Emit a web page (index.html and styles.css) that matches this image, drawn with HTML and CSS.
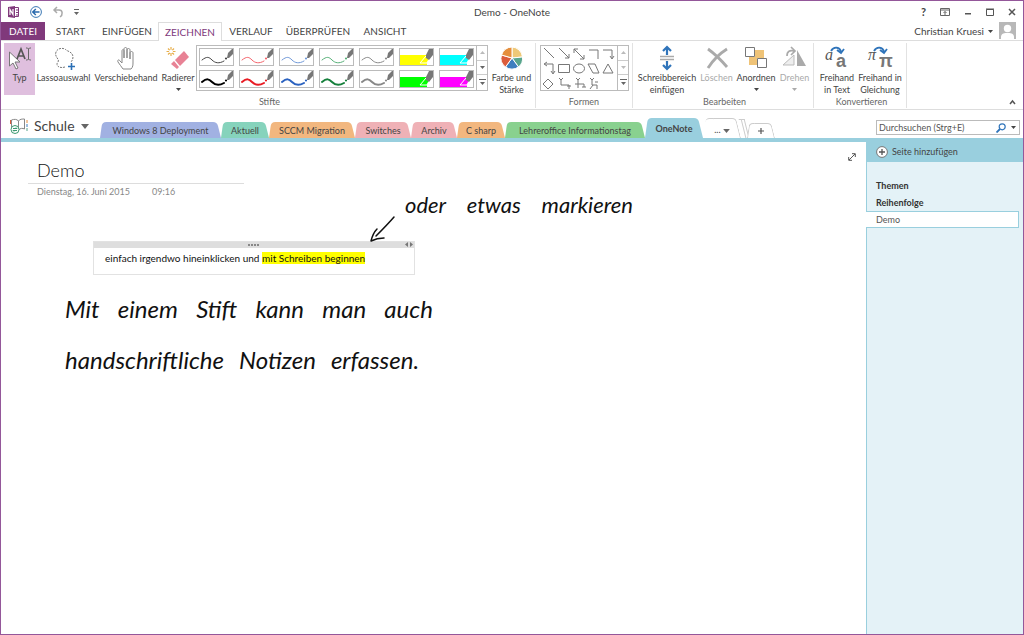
FILE: index.html
```html
<!DOCTYPE html>
<html lang="de">
<head>
<meta charset="utf-8">
<title>Demo - OneNote</title>
<link rel="stylesheet" href="styles.css">
</head>
<body>
<svg class="defs" aria-hidden="true">
  <symbol id="pen" viewBox="0 0 33 16">
    <path d="M2 11C7 7 9 8 12 11s7 4 12 1" fill="none" stroke="currentColor" stroke-width="var(--w)" stroke-linecap="round"/>
    <circle cx="26" cy="9.500" r="1.100" fill="currentColor"/>
    <path d="M27 9l1-5 4-4h1v5l-4 4z" fill="#777"/>
  </symbol>
  <symbol id="marker" viewBox="0 0 33 16">
    <path d="M0 6h27v10H0z" fill="currentColor"/>
    <path d="M20 14l6-7 3 3-2 4z" fill="currentColor" stroke="#fff"/>
    <path d="M26 6l3-6h4v6l-4 5-3-2z" fill="#777"/>
  </symbol>
  <symbol id="down" viewBox="0 0 5 3"><path d="M0 0h5L2.500 3z" fill="currentColor"/></symbol>
  <symbol id="more" viewBox="0 0 7 7"><path d="M0 0h7v1H0zM1 3h5L3.500 6z" fill="currentColor"/></symbol>
</svg>

<header class="titlebar">
  <div class="quick">
    <svg class="i12" viewBox="0 0 12 12"><path d="M0 1l7-1v12l-7-1z" fill="#80397b"/><path d="M2 9V3.500L5 8.500V3" fill="none" stroke="#fff" stroke-width="1.200"/><path d="M7 1.500h3.500v9H7M8 4h3M8 6.500h3M8 9h3" fill="none" stroke="#80397b"/></svg>
    <button aria-label="Zurück"><svg class="i12" viewBox="0 0 12 12"><circle cx="6" cy="6" r="5.400" fill="none" stroke="#3c78b4"/><path d="M9.500 6H3M5.800 3L2.800 6l3 3" fill="none" stroke="#2a6aad" stroke-width="1.500"/></svg></button>
    <button aria-label="Rückgängig"><svg class="i12" viewBox="0 0 12 12"><path d="M5 1L2 4l3 3M2 4h5c4 0 4 5 1 7" fill="none" stroke="#aaa" stroke-width="1.500"/></svg></button>
    <button aria-label="Schnellzugriff anpassen"><svg class="i5" viewBox="0 0 5 6"><path d="M0 0h5v1H0zM0 3h5L2.500 6z" fill="#666"/></svg></button>
  </div>
  <h1 class="apptitle">Demo - OneNote</h1>
  <div class="winctl">
    <button aria-label="Hilfe" class="help">?</button>
    <button aria-label="Menüband-Anzeigeoptionen"><svg class="i10" viewBox="0 0 10 10"><path d="M.5 1.500h9v7h-9zM0 3h10M5 8V4.500M3.500 6L5 4.500 6.500 6" fill="none" stroke="#666"/></svg></button>
    <button aria-label="Minimieren"><svg class="i8" viewBox="0 0 8 8"><path d="M1 5h6v1.500H1z" fill="#555"/></svg></button>
    <button aria-label="Maximieren"><svg class="i8" viewBox="0 0 8 8"><path d="M.5 1.500h7v6h-7zM0 1h8" fill="none" stroke="#555"/></svg></button>
    <button aria-label="Schließen"><svg class="i8" viewBox="0 0 8 8"><path d="M1 1l6 6M7 1L1 7" stroke="#555" stroke-width="1.500"/></svg></button>
  </div>
</header>

<nav class="menu" aria-label="Menüband">
  <button class="file">DATEI</button>
  <button class="m-start">START</button>
  <button class="m-insert">EINFÜGEN</button>
  <button class="m-draw active">ZEICHNEN</button>
  <button class="m-hist">VERLAUF</button>
  <button class="m-review">ÜBERPRÜFEN</button>
  <button class="m-view">ANSICHT</button>
  <button class="user">Christian Kruesi <svg class="i5s"><use href="#down"/></svg></button>
  <svg class="avatar" viewBox="0 0 17 17"><path d="M0 0h17v17H0z" fill="#b8b8b8"/><circle cx="8.500" cy="6.500" r="3.700" fill="#fff"/><path d="M2 17v-2c0-4 4-4 6.500-4s6.500 0 6.500 4v2z" fill="#fff"/></svg>
</nav>

<section class="ribbon">
  <div class="group g-pens">
    <div class="items">
      <button class="tool typ selected"><svg class="ic" viewBox="0 0 26 26"><path d="M2.500 7v14l3.500-3 3 6 2-1-3-6h5z" fill="#fff" stroke="#777"/><path d="M10 14l4-10 4 10M11.500 11h5" fill="none" stroke="#555" stroke-width="1.700"/><path d="M19 3h1.500l1 1 1-1H24M21.500 4v10M19 15h1.500l1-1 1 1H24" fill="none" stroke="#666"/></svg>Typ</button>
      <button class="tool lasso"><svg class="ic" viewBox="0 0 26 26"><path d="M14 22C8 24 4 20 7 17c2-3-4-5-2-10C7 2 14 3 15 5c1 1 7 2 7 7 0 2-1 4-2 5" fill="none" stroke="#777" stroke-dasharray="2 1"/><path d="M20.500 18v7M17 21.500h7" stroke="#2a6fb5" stroke-width="1.600"/></svg>Lassoauswahl</button>
      <button class="tool hand"><svg class="ic" viewBox="0 0 26 26"><path d="M10 24c-2-2-3-5-5-7-1-2 1-3 2-1l2 2V6c0-2 2-2 2 0v7V4c0-2 3-2 3 0v9V5c0-2 3-2 3 0v9V8c0-2 3-2 3 0v9c0 3 0 5-2 7z" fill="#fff" stroke="#888"/></svg>Verschiebehand</button>
      <button class="tool eraser"><svg class="ic" viewBox="0 0 26 26"><path d="M6 2v9M1.500 6.500h9M3 3.500l6 6M9 3.500l-6 6" stroke="#e8b04e" stroke-width="1.200"/><circle cx="6" cy="6.500" r="2" fill="#fff"/><path d="M10 15L19 6l5 6-9 9z" fill="#e88295"/><path d="M9 16l5 6-2 2-6-5z" fill="#e88295"/></svg>Radierer<svg class="i5s"><use href="#down"/></svg></button>
      <div class="gallery">
        <div class="pens">
          <button aria-label="Stift schwarz fein" class="thin c-dark"><svg><use href="#pen"/></svg></button>
          <button aria-label="Stift rot fein" class="thin c-rose"><svg><use href="#pen"/></svg></button>
          <button aria-label="Stift blau fein" class="thin c-sky"><svg><use href="#pen"/></svg></button>
          <button aria-label="Stift grün fein" class="thin c-mint"><svg><use href="#pen"/></svg></button>
          <button aria-label="Stift grau fein" class="thin c-gray"><svg><use href="#pen"/></svg></button>
          <button aria-label="Textmarker gelb" class="c-yellow"><svg><use href="#marker"/></svg></button>
          <button aria-label="Textmarker cyan" class="c-cyan"><svg><use href="#marker"/></svg></button>
        </div>
        <div class="pens">
          <button aria-label="Stift schwarz" class="c-black"><svg><use href="#pen"/></svg></button>
          <button aria-label="Stift rot" class="c-red"><svg><use href="#pen"/></svg></button>
          <button aria-label="Stift blau" class="c-blue"><svg><use href="#pen"/></svg></button>
          <button aria-label="Stift grün" class="c-green"><svg><use href="#pen"/></svg></button>
          <button aria-label="Stift grau" class="c-gray"><svg><use href="#pen"/></svg></button>
          <button aria-label="Textmarker grün" class="c-lime"><svg><use href="#marker"/></svg></button>
          <button aria-label="Textmarker magenta" class="c-mag"><svg><use href="#marker"/></svg></button>
        </div>
      </div>
      <div class="scroll">
        <button aria-label="Nach oben" class="off"><svg class="i5s up"><use href="#down"/></svg></button>
        <button aria-label="Nach unten"><svg class="i5s"><use href="#down"/></svg></button>
        <button aria-label="Mehr Stifte"><svg class="i7"><use href="#more"/></svg></button>
      </div>
      <button class="tool color"><svg class="ic" viewBox="-13 -13 26 26"><g stroke="#fff"><path d="M0 0V-11A11 11 0 0 1 9.500-5.500z" fill="#eec878"/><path d="M0 0V-11A11 11 0 0 1 10.500-1z" fill="#eec878"/><path d="M0 0L10.500-1A11 11 0 0 1 6.500 9z" fill="#58a58c"/><path d="M0 0L6.500 9A11 11 0 0 1-6.500 9z" fill="#3d7ebf"/><path d="M0 0L-6.500 9A11 11 0 0 1-10.500-3z" fill="#db5c3c"/><path d="M0 0L-10.500-3A11 11 0 0 1 0-11z" fill="#e58e3c"/></g></svg>Farbe und<br>Stärke</button>
    </div>
    <div class="glabel">Stifte</div>
  </div>
  <div class="group g-shapes">
    <div class="items">
      <button class="shapes" aria-label="Formen">
        <svg viewBox="0 0 76 44"><g fill="none" stroke="#777"><path d="M3 2l10 10M18 2l10 10M28 8v4h-4M33 3l10 10M33 7V3h4M43 9v4h-4M48 4h9v9M62 4h9v8M69 10l2 3 2-3M4 18h8v9M6 16l-3 2 3 2M10 25l2 3 2-3M17.500 18.500h11v8h-11zM47 18h7l4 9h-6zM67 18l5 9H62zM7 33l5 5-5 5-5-5z"/><ellipse cx="38" cy="22.500" rx="5.500" ry="4.500"/><path d="M18 32l2 2 2-2M20 34v5h8v4M26 40h4M35 32l2 2 2-2M37 34v8M34 38h9v3M41 41h4M49 32l2 2 2-2M51 34v5h5v4M49 43l3-4M54 36h3"/></g></svg>
      </button>
      <div class="scroll">
        <button aria-label="Nach oben" class="off"><svg class="i5s up"><use href="#down"/></svg></button>
        <button aria-label="Nach unten" class="off"><svg class="i5s"><use href="#down"/></svg></button>
        <button aria-label="Mehr Formen"><svg class="i7"><use href="#more"/></svg></button>
      </div>
    </div>
    <div class="glabel">Formen</div>
  </div>
  <div class="group g-edit">
    <div class="items">
      <button class="tool space"><svg class="ic" viewBox="0 0 26 26"><path d="M6 11.500h14M6 14.500h14" stroke="#aaa" stroke-width="1.500"/><path d="M13 10V3M9 6l4-4 4 4M13 16v7M9 20l4 4 4-4" fill="none" stroke="#2f74ba" stroke-width="2.200"/></svg>Schreibbereich<br>einfügen</button>
      <button class="tool del disabled"><svg class="ic" viewBox="0 0 26 26"><path d="M4 4c7 5 13 11 19 18M23 4C15 9 9 15 4 23" fill="none" stroke="#aaa" stroke-width="2.800"/></svg>Löschen</button>
      <button class="tool arr"><svg class="ic" viewBox="0 0 26 26"><path d="M12 5h9v8h-9zM6 12h8v8H6z" fill="#efc377"/><path d="M2.500 2.500h9v9h-9zM14.500 13.500h9v9h-9z" fill="#fff" stroke="#777"/></svg>Anordnen<svg class="i5s"><use href="#down"/></svg></button>
      <button class="tool rot disabled"><svg class="ic" viewBox="0 0 26 26"><path d="M12 10v10H1z" fill="#eee" stroke="#bbb"/><path d="M15 5l9 16h-9z" fill="#aaa"/><path d="M5 11c0-5 3-6 7-5M9 2l4 4-4 4" fill="none" stroke="#aaa" stroke-width="1.700"/></svg>Drehen<svg class="i5s"><use href="#down"/></svg></button>
    </div>
    <div class="glabel">Bearbeiten</div>
  </div>
  <div class="group g-conv">
    <div class="items">
      <button class="tool ftext"><svg class="ic" viewBox="0 0 26 26"><text x="1" y="15" class="g-a">a</text><text x="12" y="22" class="g-b">a</text><path d="M7 6c3-5 9-4 10 1M13 5l4 3 3-4" fill="none" stroke="#2f74ba" stroke-width="1.800"/></svg>Freihand<br>in Text</button>
      <button class="tool fmath"><svg class="ic" viewBox="0 0 26 26"><text x="1" y="15" class="g-a">π</text><text x="12" y="22" class="g-b">π</text><path d="M7 6c3-5 9-4 10 1M13 5l4 3 3-4" fill="none" stroke="#2f74ba" stroke-width="1.800"/></svg>Freihand in<br>Gleichung</button>
    </div>
    <div class="glabel">Konvertieren</div>
  </div>
  <button class="collapse" aria-label="Menüband reduzieren"><svg class="i7" viewBox="0 0 7 7"><path d="M1 5l2.500-3L6 5" fill="none" stroke="#555" stroke-width="1.500"/></svg></button>
</section>

<section class="bookbar">
  <button class="book"><svg class="bookicon" viewBox="0 0 18 16"><path d="M1.500 11V2c3-1 5-1 7 1v9c2-2 4-2 6-1V1c-2 0-5 0-6 2" fill="none" stroke="#888"/><path d="M.5 2v4" stroke="#db5c3c"/><path d="M17 2v3" stroke="#e58e3c"/><path d="M17 6v3" stroke="#3d7ebf"/><path d="M17 10v3" stroke="#58a58c"/><circle cx="5" cy="11.500" r="4" fill="#fff" stroke="#3b9a71"/><path d="M3 10.500h4l-1-1M7 12.500H3l1 1" fill="none" stroke="#3b9a71"/></svg>Schule<svg class="i8d"><use href="#down"/></svg></button>
  <nav class="sections" aria-label="Abschnitte">
    <button class="s1">Windows 8 Deployment</button>
    <button class="s2">Aktuell</button>
    <button class="s3">SCCM Migration</button>
    <button class="s4">Switches</button>
    <button class="s5">Archiv</button>
    <button class="s6">C sharp</button>
    <button class="s7">Lehreroffice Informationstag</button>
    <button class="s8 current">OneNote</button>
    <button class="outline rest" aria-label="Weitere Abschnitte">... <svg class="i7d"><use href="#down"/></svg></button>
    <i class="edge"></i><i class="edge"></i>
    <button class="outline add" aria-label="Neuer Abschnitt"><svg class="i8" viewBox="0 0 8 8"><path d="M4 1v6M1 4h6" stroke="#555" stroke-width="1.200"/></svg></button>
  </nav>
  <div class="search">
    <input type="text" placeholder="Durchsuchen (Strg+E)" aria-label="Durchsuchen">
    <button aria-label="Suchen"><svg class="i10" viewBox="0 0 10 10"><circle cx="6.200" cy="3.800" r="3" fill="none" stroke="#2f74ba" stroke-width="1.200"/><path d="M4 6L.5 9.500" stroke="#2f74ba" stroke-width="1.800"/></svg></button>
    <button aria-label="Suchbereich"><svg class="i5s"><use href="#down"/></svg></button>
  </div>
</section>

<main class="work">
  <article class="canvas">
    <h2 class="title">Demo</h2>
    <p class="date"><span>Dienstag, 16. Juni 2015</span><span>09:16</span></p>
    <button class="full" aria-label="Ganzseitenansicht"><svg class="i8" viewBox="0 0 8 8"><path d="M1 7l6-6M4 .7h3.300V4M.7 4v3.300H4" fill="none" stroke="#555"/></svg></button>
    <div class="note">
      <div class="grip"><svg class="dots" viewBox="0 0 12 2"><path d="M0 0h2v2H0zM3 0h2v2H3zM6 0h2v2H6zM9 0h2v2H9z" fill="#888"/></svg><svg class="ends" viewBox="0 0 8 5"><path d="M3 0v5L0 2.500zM5 0v5l3-2.500z" fill="#777"/></svg></div>
      <p>einfach irgendwo hineinklicken und <mark>mit Schreiben beginnen</mark></p>
    </div>
    <svg class="arrow" viewBox="0 0 30 28"><path d="M25 2C19 9 12 16 7 21M8 14C4 18 3 22 2 26c4-2 8-3 13-3" fill="none" stroke="#111" stroke-width="1.500" stroke-linecap="round" stroke-linejoin="round"/></svg>
    <p class="ink ink1"><span>oder</span> <span>etwas</span> <span>markieren</span></p>
    <p class="ink ink2"><span>Mit</span> <span>einem</span> <span>Stift</span> <span>kann</span> <span>man</span> <span>auch</span></p>
    <p class="ink ink3"><span>handschriftliche</span> <span>Notizen</span> <span>erfassen.</span></p>
  </article>
  <aside class="pages">
    <button class="newpage"><svg class="i12" viewBox="0 0 12 12"><circle cx="6" cy="6" r="5.400" fill="#fff" stroke="#777"/><path d="M6 3v6M3 6h6" stroke="#555" stroke-width="1.300"/></svg>Seite hinzufügen</button>
    <div class="list">
      <a href="#themen">Themen</a>
      <a href="#reihenfolge">Reihenfolge</a>
      <a href="#demo" class="here">Demo</a>
    </div>
  </aside>
</main>
</body>
</html>
```
FILE: styles.css
```css
* { box-sizing: border-box; }
body {
  margin: 0;
  min-height: 100vh;
  display: flex;
  flex-direction: column;
  border: 1px solid #94579a;
  background: #fff;
  color: #444;
  font: 9px/12px Lato, "Open Sans", sans-serif;
}
button {
  border: 0;
  margin: 0;
  padding: 0;
  background: none;
  color: inherit;
  font: inherit;
  white-space: nowrap;
}
svg { flex: none; }
.defs { position: absolute; width: 0; height: 0; }
.i12 { width: 12px; height: 12px; display: block; }
.i10 { width: 10px; height: 10px; display: block; }
.i8 { width: 8px; height: 8px; display: block; }
.i7 { width: 7px; height: 7px; }
.i5 { width: 5px; height: 6px; display: block; }
.i5s { width: 5px; height: 3px; }
.i7d { width: 7px; height: 4px; color: #666; }
.i8d { width: 8px; height: 5px; color: #666; }
.up { transform: rotate(180deg); }

.titlebar { display: grid; grid-template-columns: 1fr auto 1fr; align-items: center; height: 21px; }
.quick { display: flex; align-items: center; gap: 10px; padding-left: 7px; }
.apptitle { margin: 0; font-size: 10px; font-weight: 400; }
.winctl { display: flex; justify-content: flex-end; align-items: center; gap: 14px; padding-right: 7px; }
.help { font-size: 11px; font-weight: 700; }

.menu { display: flex; height: 19px; align-items: stretch; border-bottom: 1px solid #ddd; font-size: 10px; }
.menu .file { width: 44px; background: #80397b; color: #fff; }
.m-start { width: 51px; }
.m-insert { width: 62px; }
.m-draw { width: 64px; }
.m-hist { width: 58px; }
.m-review { width: 76px; }
.m-view { width: 58px; }
.menu .active { height: 19px; border: 1px solid #ddd; border-bottom: 0; background: #fff; color: #80397b; }
.user { display: flex; align-items: center; gap: 4px; margin-left: auto; padding-right: 6px; }
.avatar { width: 17px; height: 17px; margin-right: 7px; }

.ribbon { display: flex; height: 69px; padding: 2px 0 0 3px; border-bottom: 1px solid #ddd; }
.group { display: flex; flex-direction: column; justify-content: space-between; flex: none; margin-bottom: 1px; border-right: 1px solid #e2e2e2; }
.items { display: flex; align-items: flex-start; }
.glabel { text-align: center; color: #666; }
.g-pens { width: 532px; }
.g-shapes { width: 97px; padding-left: 4px; }
.g-shapes .glabel { padding-right: 4px; }
.g-edit { width: 181px; padding-left: 3px; }
.g-conv { width: 93px; padding-left: 3px; }
.tool { display: flex; flex-direction: column; align-items: center; flex: none; height: 52px; line-height: 12px; }
.tool .ic { width: 26px; height: 26px; margin: 2px 0 1px; overflow: visible; }
.tool .i5s { margin-top: 4px; }
.typ { width: 31px; }
.selected { background: #dfbfde; }
.lasso { width: 57px; }
.hand { width: 68px; }
.eraser { width: 36px; }
.color { width: 47px; }
.space { width: 62px; }
.del { width: 37px; }
.arr { width: 42px; }
.rot { width: 35px; }
.ftext { width: 40px; }
.fmath { width: 46px; }
.disabled, .disabled .i5s { color: #aaa; }
.g-a { font: italic 16px "Liberation Serif", serif; fill: #555; }
.g-b { font: bold 18px "Liberation Sans", sans-serif; fill: #777; }
.gallery { display: flex; flex-direction: column; gap: 4px; flex: none; height: 46px; margin-top: 2px; padding: 2px; border: 1px solid #bbb; border-right: 0; }
.pens { display: flex; gap: 5px; }
.pens button { flex: none; width: 35px; height: 18px; border: 1px solid #bbb; --w: 2; }
.pens .thin { --w: 1; }
.pens svg { width: 33px; height: 16px; display: block; }
.c-dark { color: #444; }
.c-rose { color: #f4626a; }
.c-sky { color: #6f98d8; }
.c-mint { color: #55b077; }
.c-gray { color: #888; }
.c-yellow { color: #ff0; }
.c-cyan { color: #0ff; }
.c-black { color: #000; }
.c-red { color: #e81c24; }
.c-blue { color: #2b62c0; }
.c-green { color: #16803c; }
.c-lime { color: #0f0; }
.c-mag { color: #f0f; }
.scroll { display: grid; grid-template-rows: 1fr 1fr 1fr; flex: none; width: 12px; height: 46px; margin-top: 2px; border: 1px solid #bbb; color: #666; }
.scroll button { display: grid; place-items: center; border-bottom: 1px solid #ccc; }
.scroll button:last-child { border-bottom: 0; }
.scroll .off { color: #bbb; }
.shapes { flex: none; width: 77px; height: 46px; margin-top: 2px; border: 1px solid #bbb; border-right: 0; }
.shapes svg { width: 76px; height: 44px; display: block; }
.collapse { align-self: flex-end; margin: 0 7px 0 auto; }

.bookbar { display: flex; align-items: flex-end; height: 32px; border-bottom: 4px solid #99cfde; }
.book { display: flex; align-items: center; gap: 6px; width: 99px; height: 24px; padding-left: 9px; font-size: 14px; }
.bookicon { width: 18px; height: 16px; }
.sections { display: flex; align-items: flex-end; flex: 1; }
.sections button { position: relative; isolation: isolate; height: 16px; flex: none; padding-top: 1px; }
.sections button::before, .sections button::after {
  content: ""; position: absolute; z-index: -1; top: 0; bottom: 0; background: var(--c); transform-origin: bottom;
}
.sections button::before { left: 0; right: 40%; border-radius: 4px 0 0 0; transform: skewX(-8deg); }
.sections button::after { left: 40%; right: 0; border-radius: 0 4px 0 0; transform: skewX(14deg); }
.s1 { width: 121px; --c: #a1b1e2; }
.s2 { width: 48px; --c: #86d3bc; }
.s3 { width: 86px; --c: #f2b77f; }
.s4 { width: 56px; --c: #efb1b6; }
.s5 { width: 46px; --c: #efb1b6; }
.s6 { width: 48px; --c: #f2b77f; }
.s7 { width: 140px; --c: #89d18f; }
.s8 { width: 58px; --c: #99cfde; }
.sections .current { height: 20px; font-weight: 700; }
.sections .outline { --c: #fff; }
.sections .outline::after { border: 1px solid #ccc; border-width: 1px 1px 0 0; }
.sections .outline::before { border-top: 1px solid #ccc; }
.sections .rest { width: 38px; height: 20px; padding-top: 4px; }
.edge { width: 3px; height: 19px; border: 1px solid #ccc; border-width: 1px 1px 0 0; transform: skewX(14deg); }
.sections .add { display: grid; place-items: center; width: 28px; height: 15px; }
.sections .add::before { border-left: 1px solid #ccc; }
.search { display: flex; align-items: center; width: 144px; height: 15px; margin: 0 3px 3px 0; border: 1px solid #bbb; gap: 5px; padding-right: 3px; }
.search input { flex: 1; min-width: 0; border: 0; padding: 0 2px; font: inherit; color: #555; outline: 0; }
.search input::placeholder { color: #555; opacity: 1; }
.search button { display: flex; }

.work { flex: 1; display: grid; grid-template-columns: 1fr 157px; }
.canvas { position: relative; padding: 16px 0 0 27px; }
.title { width: 216px; margin: 0; padding: 0 0 1px 9px; border-bottom: 1px solid #ddd; color: #111; font-size: 18px; line-height: 24px; font-weight: 300; }
.date { display: flex; gap: 22px; margin: 2px 0 0 9px; color: #888; }
.full { position: absolute; right: 10px; top: 11px; }
.note { position: absolute; left: 92px; top: 99px; width: 322px; height: 34px; border: 1px solid #e2e2e2; color: #111; font-size: 10px; }
.grip { display: flex; justify-content: center; align-items: center; position: relative; height: 6px; background: #dedede; }
.dots { width: 12px; height: 2px; }
.ends { position: absolute; right: 1px; top: 0; width: 8px; height: 5px; }
.note p { margin: 4px 0 0 11px; white-space: nowrap; }
.note mark { background: #ff0; color: inherit; }
.arrow { position: absolute; left: 368px; top: 73px; width: 30px; height: 28px; }
.ink { position: absolute; display: flex; justify-content: space-between; margin: 0; color: #111; font-size: 22px; line-height: 28px; font-style: italic; font-weight: 400; white-space: nowrap; }
.ink1 { left: 404px; top: 49px; width: 228px; }
.ink2 { left: 64px; top: 153px; width: 368px; font-size: 24px; }
.ink3 { left: 64px; top: 204px; width: 354px; font-size: 24px; }

.pages { display: flex; flex-direction: column; background: #e4f2f7; }
.newpage { display: flex; align-items: center; gap: 4px; height: 20px; padding-left: 10px; background: #99cfde; font-size: 9px; }
.list { flex: 1; padding-top: 15px; border-left: 1px solid #99cfde; }
.list a { display: block; padding: 2px 9px; line-height: 13px; color: #333; font-weight: 700; text-decoration: none; }
.list .here { margin: 0 4px 0 -1px; border: 1px solid #99cfde; border-left: 0; background: #fff; padding: 1px 10px; color: #555; font-weight: 400; }
```
